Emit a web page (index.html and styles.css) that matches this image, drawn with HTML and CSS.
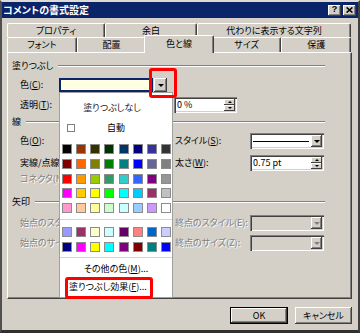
FILE: index.html
```html
<!DOCTYPE html>
<html lang="ja">
<head>
<meta charset="utf-8">
<title>コメントの書式設定</title>
<link rel="stylesheet" href="styles.css">
</head>
<body>
<div class="window">
  <div class="titlebar">
    <span class="title">コメントの書式設定</span>
    <div class="caption-btns">
      <span class="cap-btn">?</span>
      <span class="cap-btn"><svg width="7" height="6" viewBox="0 0 7 6"><path d="M0.6 0.4 L6.4 5.6 M6.4 0.4 L0.6 5.6" stroke="#000" stroke-width="1.5"/></svg></span>
    </div>
  </div>

  <div class="tabs">
    <div class="tab-row back">
      <div class="tab w-prop">プロパティ</div>
      <div class="tab w-margin">余白</div>
      <div class="tab w-alt">代わりに表示する文字列</div>
    </div>
    <div class="tab-row front">
      <div class="tab">フォント</div>
      <div class="tab">配置</div>
      <div class="tab selected">色と線</div>
      <div class="tab">サイズ</div>
      <div class="tab">保護</div>
    </div>
  </div>

  <div class="panel">
    <section class="group g-fill">
      <div class="legend"><span>塗りつぶし</span><i class="etch"></i></div>
      <div class="row r-color">
        <span class="lbl">色(<u>C</u>):</span>
        <div class="colorcombo"><span class="colorval"></span><span class="ddbtn"><i class="tri"></i></span></div>
      </div>
      <div class="row r-trans">
        <span class="lbl">透明(<u>T</u>):</span>
        <div class="slider"></div>
        <div class="field spinfield"><span class="val">0 %</span><span class="spinner"><i class="sp up"></i><i class="sp down"></i></span></div>
      </div>
    </section>

    <section class="group g-line">
      <div class="legend"><span>線</span><i class="etch"></i></div>
      <div class="row r-l1">
        <span class="lbl">色(<u>O</u>):</span>
        <div class="field left-ctl"></div>
        <span class="rlbl">スタイル(<u>S</u>):</span>
        <div class="field combo"><span class="linestyle"></span><span class="ddbtn"><i class="tri"></i></span></div>
      </div>
      <div class="row r-l2">
        <span class="lbl">実線/点線(<u>D</u>):</span>
        <div class="field left-ctl"></div>
        <span class="rlbl">太さ(<u>W</u>):</span>
        <div class="field spinfield"><span class="val">0.75 pt</span><span class="spinner"><i class="sp up"></i><i class="sp down"></i></span></div>
      </div>
      <div class="row r-l3">
        <span class="lbl dis">コネクタ(N):</span>
        <div class="field left-ctl off"></div>
      </div>
    </section>

    <section class="group g-arrow">
      <div class="legend"><span>矢印</span><i class="etch"></i></div>
      <div class="row r-a1">
        <span class="lbl dis">始点のスタイル(B):</span>
        <div class="field left-ctl off"></div>
        <span class="rlbl dis">終点のスタイル(E):</span>
        <div class="field combo off"><span class="fill"></span><span class="ddbtn"><i class="tri"></i></span></div>
      </div>
      <div class="row r-a2">
        <span class="lbl dis">始点のサイズ(I):</span>
        <div class="field left-ctl off"></div>
        <span class="rlbl dis">終点のサイズ(Z):</span>
        <div class="field combo off"><span class="fill"></span><span class="ddbtn"><i class="tri"></i></span></div>
      </div>
    </section>
  </div>

  <div class="footer">
    <button class="btn default">OK</button>
    <button class="btn">キャンセル</button>
  </div>

  <div class="popup">
    <div class="p-none">塗りつぶしなし</div>
    <div class="p-auto"><span class="chk"></span><span>自動</span><span></span></div>
    <div class="palette main">
      <span class="sw" style="background:#000000"></span><span class="sw" style="background:#993300"></span><span class="sw" style="background:#333300"></span><span class="sw" style="background:#003300"></span><span class="sw" style="background:#003366"></span><span class="sw" style="background:#000080"></span><span class="sw" style="background:#333399"></span><span class="sw" style="background:#333333"></span>
      <span class="sw" style="background:#800000"></span><span class="sw" style="background:#ff6600"></span><span class="sw" style="background:#808000"></span><span class="sw" style="background:#008000"></span><span class="sw" style="background:#008080"></span><span class="sw" style="background:#0000ff"></span><span class="sw" style="background:#666699"></span><span class="sw" style="background:#808080"></span>
      <span class="sw" style="background:#ff0000"></span><span class="sw" style="background:#ff9900"></span><span class="sw" style="background:#99cc00"></span><span class="sw" style="background:#339966"></span><span class="sw" style="background:#33cccc"></span><span class="sw" style="background:#3366ff"></span><span class="sw" style="background:#800080"></span><span class="sw" style="background:#969696"></span>
      <span class="sw" style="background:#ff00ff"></span><span class="sw" style="background:#ffcc00"></span><span class="sw" style="background:#ffff00"></span><span class="sw" style="background:#00ff00"></span><span class="sw" style="background:#00ffff"></span><span class="sw" style="background:#00ccff"></span><span class="sw" style="background:#993366"></span><span class="sw" style="background:#c0c0c0"></span>
      <span class="sw" style="background:#ff99cc"></span><span class="sw" style="background:#ffcc99"></span><span class="sw" style="background:#ffff99"></span><span class="sw" style="background:#ccffcc"></span><span class="sw" style="background:#ccffff"></span><span class="sw" style="background:#99ccff"></span><span class="sw" style="background:#cc99ff"></span><span class="sw" style="background:#ffffff"></span>
    </div>
    <div class="p-sep"></div>
    <div class="palette chart">
      <span class="sw" style="background:#9999ff"></span><span class="sw" style="background:#993366"></span><span class="sw" style="background:#ffffcc"></span><span class="sw" style="background:#ccffff"></span><span class="sw" style="background:#660066"></span><span class="sw" style="background:#ff8080"></span><span class="sw" style="background:#0066cc"></span><span class="sw" style="background:#ccccff"></span>
      <span class="sw" style="background:#000080"></span><span class="sw" style="background:#ff00ff"></span><span class="sw" style="background:#ffff00"></span><span class="sw" style="background:#00ffff"></span><span class="sw" style="background:#800080"></span><span class="sw" style="background:#800000"></span><span class="sw" style="background:#008080"></span><span class="sw" style="background:#0000ff"></span>
    </div>
    <div class="p-sep second"></div>
    <div class="p-more">その他の色(<u>M</u>)...</div>
    <div class="p-effect">塗りつぶし効果(<u>F</u>)...</div>
  </div>

  <div class="mark mark-dd"></div>
  <div class="mark mark-effect"></div>
</div>
</body>
</html>
```

FILE: styles.css
```css
* { box-sizing: border-box; margin: 0; padding: 0; }
html, body { width: 360px; height: 333px; overflow: hidden; }
body {
  font-family: "Noto Sans CJK JP", "Noto Sans", sans-serif;
  font-size: 9px;
  line-height: 12px;
  font-feature-settings: "palt";
  color: #000;
  background: #d4d0c8;
}
u { text-decoration: underline; text-underline-offset: 1px; }

.window {
  position: relative;
  width: 360px;
  height: 333px;
  background: #d4d0c8;
  border-style: solid;
  border-width: 2px 2px 3px 2px;
  border-color: #dedbd4 #404040 #303030 #505050;
  display: flex;
  flex-direction: column;
}

/* title bar */
.titlebar {
  height: 16px;
  flex: none;
  background: #0a246a;
  display: flex;
  align-items: center;
  padding-left: 1px;
}
.title { color: #fff; font-weight: bold; font-size: 10px; }
.caption-btns { display: flex; gap: 2px; margin-left: auto; margin-right: 2px; }
.cap-btn {
  width: 13px; height: 11px;
  background: #d4d0c8;
  box-shadow: inset -1px -1px #404040, inset 1px 1px #fff, inset -2px -2px #808080;
  display: flex; align-items: center; justify-content: center;
  font: bold 9px/1 "Liberation Sans", sans-serif;
  padding-bottom: 1px;
}

/* tabs */
.tabs { margin: 5px 7px 0 5px; flex: none; }
.tab-row { display: flex; }
.tab-row.back { height: 14px; }
.tab-row.front { height: 15px; }
.tab {
  background: #d4d0c8;
  border: 1px solid;
  border-color: #fff #404040 transparent #fff;
  border-bottom: none;
  border-radius: 2px 2px 0 0;
  box-shadow: inset -1px 0 #808080;
  text-align: center;
  white-space: nowrap;
}
.back .tab { line-height: 13px; }
.front .tab { flex: 1 1 0; line-height: 14px; }
.w-prop { width: 98px; }
.w-margin { width: 92px; }
.w-alt { width: 154px; }
.tab.selected {
  position: relative;
  z-index: 2;
  margin: -2px -2px -1px;
  line-height: 16px;
}

/* panel */
.panel {
  flex: none;
  height: 247px;
  margin: 0 6px 0 5px;
  border-top: 1px solid #fff;
  border-left: 1px solid #fff;
  border-right: 1px solid #404040;
  border-bottom: 1px solid #404040;
  box-shadow: inset -1px -1px #808080;
}
.group { margin-left: 4px; width: 313px; }
.legend { display: flex; align-items: center; height: 12px; white-space: nowrap; }
.etch { flex: 1; height: 2px; border-top: 1px solid #808080; border-bottom: 1px solid #fff; margin-left: 5px; }
.g-fill .legend { margin-top: 7px; }
.g-line .legend { margin-top: 5px; }
.g-arrow .legend { margin-top: 11px; }

.row {
  display: grid;
  grid-template-columns: 39px 116px 75px 74px;
  align-items: center;
  padding-left: 8px;
  white-space: nowrap;
}
.r-color { margin-top: 6px; height: 14px; }
.r-trans { margin-top: 5px; height: 14px; grid-template-columns: 39px 115px 63px; }
.r-l1 { margin-top: 5px; height: 16px; }
.r-l2 { margin-top: 6px; height: 16px; }
.r-l3 { margin-top: 1px; height: 13px; }
.r-a1 { margin-top: 7px; height: 16px; }
.r-a2 { margin-top: 4px; height: 16px; }

.dis { color: #808080; text-shadow: 1px 1px 0 #fff; }

.field {
  height: 100%;
  background: #fff;
  box-shadow: inset 1px 1px #808080, inset 2px 2px #404040, inset -1px -1px #fff, inset -2px -2px #d4d0c8;
  display: flex;
  align-items: center;
  padding: 2px;
}
.field.off { background: #d4d0c8; }
.left-ctl { width: 107px; }

.colorcombo { display: flex; width: 108px; height: 14px; }
.colorval { flex: 1; border: 2px solid #0a246a; background: #ffffe1; }
.colorcombo .ddbtn { width: 13px; height: 14px; margin-left: 1px; }

.ddbtn {
  width: 11px; height: 12px;
  flex: none;
  background: #d4d0c8;
  box-shadow: inset -1px -1px #404040, inset 1px 1px #fff, inset -2px -2px #808080;
  display: flex; align-items: center; justify-content: center;
}
.tri { width: 0; height: 0; border-left: 3px solid transparent; border-right: 3px solid transparent; border-top: 3px solid #000; }
.off .tri { border-top-color: #808080; }

.combo .linestyle { flex: 1; height: 1px; background: #000; margin: 0 2px 0 1px; }
.combo .fill { flex: 1; }

.slider { width: 100px; height: 4px; }
.spinfield { justify-content: space-between; }
.spinfield .val { padding-left: 1px; }
.spinner { display: flex; flex-direction: column; width: 11px; height: 12px; }
.sp {
  flex: 1;
  background: #d4d0c8;
  box-shadow: inset -1px -1px #404040, inset 1px 1px #fff;
  display: flex; align-items: center; justify-content: center;
}
.sp::after { content: ""; width: 0; height: 0; border-left: 2px solid transparent; border-right: 2px solid transparent; }
.sp.up::after { border-bottom: 2px solid #000; }
.sp.down::after { border-top: 2px solid #000; }

/* footer buttons */
.footer { flex: none; display: flex; justify-content: flex-end; gap: 7px; margin: 8px 6px 0 0; height: 17px; }
.btn {
  font: inherit;
  font-feature-settings: "palt";
  color: #000;
  background: #d4d0c8;
  border: none;
  height: 17px;
  width: 57px;
  box-shadow: inset -1px -1px #404040, inset 1px 1px #fff, inset -2px -2px #808080;
}
.btn.default {
  width: 58px;
  border: 1px solid #000;
  box-shadow: inset -1px -1px #404040, inset 1px 1px #fff, inset -2px -2px #808080;
}

/* color popup */
.popup {
  position: absolute;
  left: 57px; top: 90px;
  width: 114px; height: 206px;
  background: #fff;
  border: 1px solid #a0a0a0;
  padding-top: 7px;
  z-index: 5;
}
.p-none { height: 15px; line-height: 15px; text-align: center; padding-right: 8px; color: #222; }
.p-auto { margin-top: 6px; height: 14px; display: grid; grid-template-columns: 8px 1fr 8px; align-items: center; padding: 0 7px; }
.p-auto span { text-align: center; }
.p-auto .chk { width: 8px; height: 8px; border: 1px solid #808080; background: #fff; }
.palette { display: grid; grid-template-columns: repeat(8, 10px); column-gap: 4.14px; row-gap: 4.75px; margin-left: 2px; }
.palette.main { margin-top: 9px; }
.palette.chart { margin-top: 7px; }
.sw { width: 10px; height: 10px; border: 1px solid #8c8c8c; }
.p-sep { height: 1px; background: #d4d4d4; margin-top: 6px; }
.p-sep.second { margin-top: 5px; }
.p-more { margin-top: 4px; height: 14px; line-height: 14px; text-align: center; }
.p-effect { margin-top: 3px; height: 15px; line-height: 15px; padding-left: 9px; white-space: nowrap; }

/* red annotation boxes */
.mark { position: absolute; border: 3px solid #ff0000; border-radius: 3px; z-index: 6; }
.mark-dd { left: 147px; top: 66px; width: 28px; height: 30px; }
.mark-effect { left: 63px; top: 275px; width: 88px; height: 22px; }
```
